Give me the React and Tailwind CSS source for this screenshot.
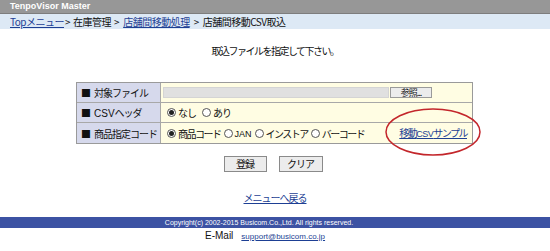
import React from "react";

const jp = { fontFamily: '"Noto Sans CJK JP", "Noto Sans", sans-serif' };
const lat = { fontFamily: '"Liberation Sans", Arial, sans-serif' };

function Radio({ checked, label }) {
  return (
    <span className="flex items-center gap-[2px] whitespace-nowrap">
      <span className="w-[9px] h-[9px] rounded-full border border-[#555] bg-white flex items-center justify-center shrink-0">
        {checked && <span className="w-[5px] h-[5px] rounded-full bg-[#222]" />}
      </span>
      <span>{label}</span>
    </span>
  );
}

export default function App() {
  return (
    <div className="w-[550px] h-[251px] bg-white text-[10px] tracking-[-1px] text-[#111] relative overflow-hidden" style={jp}>
      <div className="h-[14px] bg-[#979797] border-b border-[#7d7d7d] flex items-center pl-[10px] text-white font-bold text-[9px] tracking-normal leading-none" style={lat}>
        TenpoVisor Master
      </div>
      <div className="h-[15px] bg-[#dde9f5] flex items-center pl-[10px] leading-none whitespace-nowrap tracking-[-0.5px]">
        <a className="text-[#1d3f94] underline">Topメニュー</a>
        <span className="ml-[1px]">&gt;</span>
        <span className="ml-[3px]">在庫管理</span>
        <span className="ml-[3px]">&gt;</span>
        <a className="ml-[4px] text-[#1d3f94] underline">店舗間移動処理</a>
        <span className="ml-[4px]">&gt;</span>
        <span className="ml-[4px]">店舗間移動CSV取込</span>
      </div>

      <div className="mt-[17px] h-[11px] text-center leading-none tracking-[-1.5px]">取込ファイルを指定して下さい。</div>

      <div className="mt-[25px] w-[397px] ml-[76px] border border-[#9a9a9a] grid grid-cols-[84px_1fr] whitespace-nowrap">
        <div className="h-[20px] bg-[#d6d9ec] border-b border-r border-[#a8a8a8] flex items-center pl-[4px] gap-[4px]">
          <span>■</span><span>対象ファイル</span>
        </div>
        <div className="h-[20px] bg-[#fffde3] border-b border-[#a8a8a8] flex items-center pl-[2px] gap-[1px]">
          <span className="w-[226px] h-[11px] bg-[#e0e0e0] border border-[#d4d4d4]" />
          <span className="w-[42px] h-[11px] bg-[#ececec] border border-[#9a9a9a] flex items-center justify-center text-[9px] leading-none">参照...</span>
        </div>
        <div className="h-[20px] bg-[#d6d9ec] border-b border-r border-[#a8a8a8] flex items-center pl-[4px] gap-[4px]">
          <span>■</span>
          <span><span style={lat} className="tracking-normal">CSV</span>ヘッダ</span>
        </div>
        <div className="h-[20px] bg-[#fffde3] border-b border-[#a8a8a8] flex items-center pl-[6px] gap-[6px]">
          <Radio checked label="なし" />
          <Radio label="あり" />
        </div>
        <div className="h-[20px] bg-[#d6d9ec] border-r border-[#a8a8a8] flex items-center pl-[4px] gap-[4px]">
          <span>■</span><span>商品指定コード</span>
        </div>
        <div className="h-[20px] bg-[#fffde3] flex items-center pl-[6px] gap-[3px] tracking-[-1.5px]">
          <Radio checked label="商品コード" />
          <Radio label={<span style={lat} className="tracking-normal text-[9px]">JAN</span>} />
          <Radio label="インストア" />
          <Radio label="バーコード" />
          <a className="ml-auto mr-[5px] text-[#1d3f94] underline tracking-[-1.5px]">移動<span style={lat} className="tracking-[-0.5px] text-[9px]">CSV</span>サンプル</a>
        </div>
      </div>

      <div className="mt-[12px] flex justify-center gap-[12px] pr-[4px]">
        <button className="w-[43px] h-[16px] bg-[#ececec] border border-[#8a8a8a] text-[10px] leading-none tracking-[-1px]" style={jp}>登録</button>
        <button className="w-[44px] h-[16px] bg-[#ececec] border border-[#8a8a8a] text-[10px] leading-none tracking-[-1px]" style={jp}>クリア</button>
      </div>

      <div className="mt-[21px] h-[11px] text-center leading-none">
        <a className="text-[#1d3f94] underline text-[10px]">メニューへ戻る</a>
      </div>

      <div className="mt-[13px] h-[11px] bg-[#3c52a3] text-white text-[7px] tracking-normal leading-none flex items-center justify-center pr-[32px]" style={lat}>
        Copyright(c) 2002-2015 Busicom.Co.,Ltd. All rights reserved.
      </div>
      <div className="mt-[3px] flex items-end gap-[8px] leading-none tracking-normal pl-[205px]" style={lat}>
        <span className="text-[10px]">E-Mail</span>
        <a className="text-[#1d3f94] underline text-[8px]">support@busicom.co.jp</a>
      </div>

      <svg className="absolute left-[383px] top-[106px]" width="100" height="52" viewBox="0 0 100 52">
        <ellipse cx="50" cy="26" rx="47" ry="23" fill="none" stroke="#c3262b" strokeWidth="1.5" />
      </svg>
    </div>
  );
}
